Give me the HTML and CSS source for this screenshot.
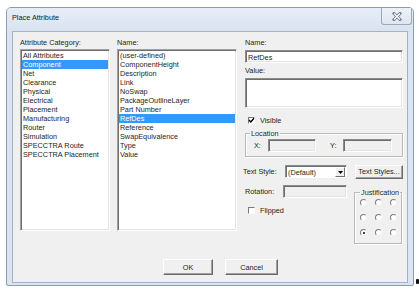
FILE: index.html
```html
<!DOCTYPE html>
<html lang="en">
<head>
  <meta charset="UTF-8" />
  <title>Place Attribute</title>
  <link rel="stylesheet" href="styles.css">
</head>
<body>
  <div class="dialog">
    <div class="titlebar">
      <span class="title">Place Attribute</span>
      <span class="close">
        <svg width="10" height="9" viewBox="0 0 10 9">
          <path d="M2 1.5 L8 7.5 M8 1.5 L2 7.5" stroke="#6f7d92" stroke-width="3" stroke-linecap="square" fill="none"/>
          <path d="M2 1.5 L8 7.5 M8 1.5 L2 7.5" stroke="#fff" stroke-width="1.2" fill="none"/>
        </svg>
      </span>
    </div>
    <div class="client">
      <div class="main">
        <div class="col col-cat">
          <div class="label">Attribute Category:</div>
          <ul class="listbox">
            <li>All Attributes</li>
            <li class="sel">Component</li>
            <li>Net</li>
            <li>Clearance</li>
            <li>Physical</li>
            <li>Electrical</li>
            <li>Placement</li>
            <li>Manufacturing</li>
            <li>Router</li>
            <li>Simulation</li>
            <li>SPECCTRA Route</li>
            <li>SPECCTRA Placement</li>
          </ul>
        </div>
        <div class="col col-name">
          <div class="label">Name:</div>
          <ul class="listbox">
            <li>(user-defined)</li>
            <li>ComponentHeight</li>
            <li>Description</li>
            <li>Link</li>
            <li>NoSwap</li>
            <li>PackageOutlineLayer</li>
            <li>Part Number</li>
            <li class="sel">RefDes</li>
            <li>Reference</li>
            <li>SwapEquivalence</li>
            <li>Type</li>
            <li>Value</li>
          </ul>
        </div>
        <div class="props">
          <div class="label">Name:</div>
          <div class="edit">RefDes</div>
          <div class="label">Value:</div>
          <div class="edit tall"></div>
          <div class="check-row">
            <span class="checkbox">
              <svg width="7" height="7" viewBox="0 0 7 7"><path d="M1 3 L2.8 5 L6 1.2" stroke="#000" stroke-width="1.4" fill="none"/></svg>
            </span>
            Visible
          </div>
          <fieldset class="group location">
            <legend>Location</legend>
            <span class="xy-label">X:</span>
            <span class="edit disabled x-box"></span>
            <span class="xy-label y-label">Y:</span>
            <span class="edit disabled y-box"></span>
          </fieldset>
          <div class="style-row">
            <span class="style-label">Text Style:</span>
            <span class="combo">
              <span class="combo-text">(Default)</span>
              <span class="combo-btn">
                <svg width="5" height="3" viewBox="0 0 5 3"><path d="M0 0 H5 L2.5 3 Z" fill="#000"/></svg>
              </span>
            </span>
            <button class="btn styles-btn">Text Styles...</button>
          </div>
          <div class="lower">
            <div class="lower-left">
              <div class="rot-row">
                <span class="rot-label">Rotation:</span>
                <span class="edit disabled rot-box"></span>
              </div>
              <div class="check-row flip-row">
                <span class="checkbox"></span>
                Flipped
              </div>
            </div>
            <fieldset class="group justify">
              <legend>Justification</legend>
              <div class="radios">
                <span class="radio"></span><span class="radio"></span><span class="radio"></span>
                <span class="radio"></span><span class="radio"></span><span class="radio"></span>
                <span class="radio on"></span><span class="radio"></span><span class="radio"></span>
              </div>
            </fieldset>
          </div>
        </div>
      </div>
      <div class="buttons">
        <button class="btn ok">OK</button>
        <button class="btn cancel">Cancel</button>
      </div>
    </div>
  </div>
  <span class="cursor-mark"></span>
</body>
</html>
```

FILE: styles.css
```css
* { margin: 0; padding: 0; box-sizing: border-box; }
html, body {
  width: 100%; height: 100%;
  background: #fff;
  font-family: "Liberation Sans", Arial, sans-serif;
  font-size: 7.3px; line-height: 9px; color: #1e1e1e;
  overflow: hidden;
}
.dialog {
  width: 408px; height: 279px;
  margin: 7px 0 0 6px;
  border: 1px solid #8d9cb0;
  border-radius: 5px 5px 2px 2px;
  background: #dbe5f2;
  display: flex; flex-direction: column;
}
.titlebar {
  height: 23px;
  display: flex; justify-content: space-between; align-items: flex-start;
  background: linear-gradient(#e6edf7, #d9e3f1);
  border-radius: 4px 4px 0 0;
}
.title { margin: 5px 0 0 5px; color: #1a1a1a; }
.close {
  width: 31px; height: 17px;
  margin-right: 1px;
  display: flex; align-items: center; justify-content: center;
  border: 1px solid #9aa8ba; border-top: none;
  border-radius: 0 0 3px 3px;
  background: linear-gradient(#eef2f8, #dfe6f0);
}
.close svg { display: block; }
.client {
  height: 252px;
  margin: 0 5px 2px;
  border: 1px solid #a4b2c5;
  background: #f0f0f0;
  padding: 6px 0 0 7px;
  display: flex; flex-direction: column;
}
.main { display: flex; align-items: flex-start; }
.col-cat { width: 90px; }
.col-name { width: 120px; margin-left: 7px; }
.props { width: 158px; margin-left: 8px; }
.label { height: 9px; }
.listbox {
  list-style: none;
  height: 182px;
  margin-top: 2px;
  padding: 1px;
  background: #fff;
  border: 1px solid; border-color: #a0a0a0 #fff #fff #a0a0a0;
  box-shadow: inset 1px 1px #6e6e6e, inset -1px -1px #e3e3e3;
}
.listbox li { height: 9px; padding-left: 1px; white-space: nowrap; }
.listbox li.sel { background: #3399ff; color: #fff; }

.edit {
  display: block;
  height: 13px;
  padding: 2px 0 0 2px;
  background: #fff;
  border: 1px solid; border-color: #8c8c8c #fff #fff #8c8c8c;
  box-shadow: inset 1px 1px #6e6e6e, inset -1px -1px #e3e3e3;
}
.props .edit { margin: 3px 0; }
.props .edit.tall { height: 30px; margin-bottom: 8px; }
.edit.disabled { background: #f0f0f0; }

.check-row { height: 9px; display: flex; align-items: center; padding-left: 3px; }
.checkbox {
  width: 7px; height: 7px; margin-right: 5px;
  background: #fff;
  border: 1px solid; border-color: #7a7a7a #fff #fff #7a7a7a;
  display: flex; align-items: center; justify-content: center;
}
.checkbox svg { display: block; margin: -1px; }

.group {
  border: 1px solid #b9b9b9;
  box-shadow: 1px 1px #fff, inset 1px 1px #fff;
  min-width: 0;
}
.group legend { padding: 0 1px; line-height: 9px; }
.location {
  margin-top: 4px;
  padding: 1px 0 4px 8px;
  display: flex; align-items: center;
}
.location legend { margin-left: -4px; }
.location .edit { margin: 0; }
.xy-label { width: 14px; }
.y-label { width: 13px; margin-left: 14px; }
.x-box { width: 48px; }
.y-box { width: 49px; }

.style-row { display: flex; align-items: center; margin-top: 8px; height: 13px; }
.style-label { width: 42px; margin-left: -2px; }
.combo {
  width: 62px; height: 13px;
  display: flex; align-items: center; justify-content: space-between;
  background: #fff;
  border: 1px solid; border-color: #8c8c8c #fff #fff #8c8c8c;
  box-shadow: inset 1px 1px #6e6e6e;
  padding: 1px 1px 0 2px;
}
.combo-btn {
  width: 10px; height: 10px;
  display: flex; align-items: center; justify-content: center;
  background: #f0f0f0;
  border: 1px solid; border-color: #fff #6e6e6e #6e6e6e #fff;
}
.combo-btn svg { display: block; }

.btn {
  font: inherit; color: #1e1e1e;
  background: #f0f0f0;
  border: 1px solid; border-color: #fff #6a6a6a #6a6a6a #fff;
  box-shadow: inset -1px -1px #a0a0a0;
}
.styles-btn { width: 48px; height: 14px; margin-left: 8px; }

.lower { display: flex; align-items: flex-start; margin-top: 7px; }
.lower-left { width: 102px; }
.rot-row { display: flex; align-items: center; height: 13px; }
.rot-label { width: 38px; }
.rot-box { width: 64px; }
.props .rot-box { margin: 0; }
.flip-row { margin-top: 8px; }

.justify {
  width: 48px; height: 56px;
  margin: 3px 0 0 7px;
  padding: 2px 0 0 5px;
}
.radios { display: grid; grid-template-columns: repeat(3, 7px); gap: 8px 8px; }
.radio {
  width: 7px; height: 7px; border-radius: 50%;
  background: #fff;
  border: 1px solid; border-color: #7e7e7e #f4f4f4 #f4f4f4 #7e7e7e;
  display: flex; align-items: center; justify-content: center;
}
.radio.on::after { content: ""; width: 2px; height: 2px; border-radius: 50%; background: #000; }

.buttons { display: flex; gap: 12px; margin-top: 15px; padding-left: 143px; }
.ok { width: 50px; height: 16px; }
.cancel { width: 53px; height: 16px; }

.cursor-mark {
  position: absolute; left: 416px; top: 279px;
  width: 3px; height: 5px; background: #111; border-radius: 1px;
}
```
